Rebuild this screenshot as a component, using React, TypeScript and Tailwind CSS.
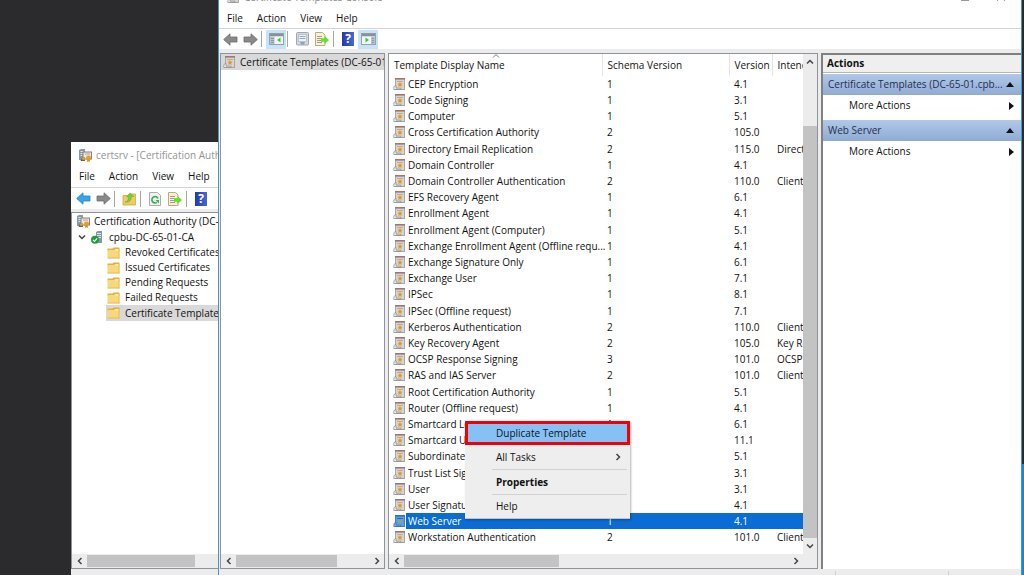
import React from "react";

interface Template {
  name: string;
  schema: string;
  version: string;
  purpose?: string;
}

const templates: Template[] = [
  { name: "CEP Encryption", schema: "1", version: "4.1" },
  { name: "Code Signing", schema: "1", version: "3.1" },
  { name: "Computer", schema: "1", version: "5.1" },
  { name: "Cross Certification Authority", schema: "2", version: "105.0" },
  { name: "Directory Email Replication", schema: "2", version: "115.0", purpose: "Directory" },
  { name: "Domain Controller", schema: "1", version: "4.1" },
  { name: "Domain Controller Authentication", schema: "2", version: "110.0", purpose: "Client" },
  { name: "EFS Recovery Agent", schema: "1", version: "6.1" },
  { name: "Enrollment Agent", schema: "1", version: "4.1" },
  { name: "Enrollment Agent (Computer)", schema: "1", version: "5.1" },
  { name: "Exchange Enrollment Agent (Offline requ...", schema: "1", version: "4.1" },
  { name: "Exchange Signature Only", schema: "1", version: "6.1" },
  { name: "Exchange User", schema: "1", version: "7.1" },
  { name: "IPSec", schema: "1", version: "8.1" },
  { name: "IPSec (Offline request)", schema: "1", version: "7.1" },
  { name: "Kerberos Authentication", schema: "2", version: "110.0", purpose: "Client" },
  { name: "Key Recovery Agent", schema: "2", version: "105.0", purpose: "Key Rec" },
  { name: "OCSP Response Signing", schema: "3", version: "101.0", purpose: "OCSP" },
  { name: "RAS and IAS Server", schema: "2", version: "101.0", purpose: "Client" },
  { name: "Root Certification Authority", schema: "1", version: "5.1" },
  { name: "Router (Offline request)", schema: "1", version: "4.1" },
  { name: "Smartcard Logon", schema: "1", version: "6.1" },
  { name: "Smartcard User", schema: "1", version: "11.1" },
  { name: "Subordinate Certification Authority", schema: "1", version: "5.1" },
  { name: "Trust List Signing", schema: "1", version: "3.1" },
  { name: "User", schema: "1", version: "3.1" },
  { name: "User Signature Only", schema: "1", version: "4.1" },
  { name: "Web Server", schema: "1", version: "4.1" },
  { name: "Workstation Authentication", schema: "2", version: "101.0", purpose: "Client" },
];

const folders = [
  "Revoked Certificates",
  "Issued Certificates",
  "Pending Requests",
  "Failed Requests",
  "Certificate Templates",
];

/* Icons */

const TemplateIcon: React.FC<{ selected?: boolean }> = ({ selected }) => (
  <svg className="w-3 h-3 shrink-0" viewBox="0 0 12 12">
    <path d="M2 0h10v12H2z" fill={selected ? "#3f83cc" : "#a9a6a6"} />
    <path d="M3 1.500h8v9.500H3z" fill={selected ? "#5b9fe0" : "#d8d4d0"} />
    <path d="M2 0h10v1.500H2z" fill={selected ? "#3d72b0" : "#a3786c"} />
    <path d="M4 3.500h6" stroke={selected ? "#2b67aa" : "#b3aeab"} />
    <path d="M7 4l.8 1.600 1.800.2-1.300 1.300.3 1.800L7 8.100l-1.600.8.3-1.800-1.300-1.300 1.800-.2z" fill={selected ? "#8fa48f" : "#de9a25"} />
    <path d="M.8 10.200C.8 8.500 1.500 7.500 3 7.500v2.700h5v1.300H.8z" fill={selected ? "#7db5ec" : "#f6f6f6"} stroke={selected ? "#2c6fb8" : "#858282"} strokeWidth=".7" />
  </svg>
);

const AuthorityIcon = () => (
  <svg className="w-[13px] h-[13px] shrink-0" viewBox="0 0 13 13">
    <path d="M0 1l2-1h4v11H0z" fill="#8799a6" />
    <path d="M1.500 2.500h3M1.500 4.500h3M1.500 6.500h2" stroke="#dfe7ec" />
    <rect x="4" y="3" width="8.500" height="7" fill="#efe5dc" stroke="#86807c" />
    <path d="M6 5h5" stroke="#b5a59a" />
    <path d="M3 8.500L1.500 12H6V8.500z" fill="#77603f" />
    <circle cx="4.500" cy="9.500" r="1.500" fill="#dba23b" />
    <circle cx="9.500" cy="9" r="2.500" fill="#e2a030" />
    <path d="M8.200 10.500V13l1.300-.8 1.300.8v-2.500z" fill="#d48c28" />
  </svg>
);

const ServerIcon = () => (
  <svg className="w-3 h-[13px] shrink-0" viewBox="0 0 12 13">
    <path d="M5 1l2-1h4v12H5z" fill="#8696a1" />
    <path d="M6 2.500h4M6 4.500h4M6 6.500h4" stroke="#dbe4ea" />
    <circle cx="4" cy="8.800" r="4" fill="#1f9d3e" />
    <path d="M2 8.800l1.500 1.600 2.600-3" fill="none" stroke="#fff" strokeWidth="1.100" />
  </svg>
);

const FolderIcon = () => (
  <svg className="w-[13px] h-3 shrink-0" viewBox="0 0 13 12">
    <path d="M.5 1.500h5l1-1h6V4h-12z" fill="#ddb048" />
    <path d="M.5 3H7l1-1h4.500v9.500H.5z" fill="#f9d87c" />
    <path d="M.5 11h12M12 2.500v9" stroke="#e0b955" strokeWidth=".8" />
    <path d="M8.500 3h2.500" stroke="#fff3c4" />
  </svg>
);

const ArrowIcon: React.FC<{ fill: string; stroke: string; right?: boolean }> = ({ fill, stroke, right }) => (
  <svg className={`w-[15px] h-[13px] ${right ? "-scale-x-100" : ""}`} viewBox="0 0 15 13">
    <path d="M.7 6.500L7 .8v3.200h7v5H7v3.200z" fill={fill} stroke={stroke} strokeWidth=".8" />
  </svg>
);

const UpFolderIcon = () => (
  <svg className="w-[14px] h-[14px]" viewBox="0 0 14 14">
    <path d="M1 3.500h5l1-1.500h6.500v11H1z" fill="#f0ca66" stroke="#d0a744" strokeWidth=".8" />
    <path d="M3 10c2.500-.5 3.500-2 3.500-5H4.500L8 1l4 3.500H9.500C9.500 8.500 7 11 3 10z" fill="#6fd02f" stroke="#56a82a" strokeWidth=".4" />
  </svg>
);

const RefreshIcon = () => (
  <svg className="w-3 h-[14px]" viewBox="0 0 12 14">
    <path d="M.5.5h8l3 3v10H.5z" fill="#f1f1f1" stroke="#adadad" />
    <path d="M9 6.500A3.200 3.200 0 1 0 8 10.300" fill="none" stroke="#31b450" strokeWidth="1.600" />
    <path d="M6.500 8H10v3.500z" fill="#31b450" />
  </svg>
);

const ExportIcon = () => (
  <svg className="w-[14px] h-[14px]" viewBox="0 0 14 14">
    <path d="M.5.5h7l2.500 2.500v10.500H.5z" fill="#faf2cf" stroke="#b3ab90" />
    <path d="M2 4.500h5M2 6.500h4M2 8.500h4M2 10.500h5" stroke="#a19d8c" />
    <path d="M6 6.200h3.500V4L14 8l-4.500 4V9.800H6z" fill="#62e02c" />
  </svg>
);

const PropertiesIcon = () => (
  <svg className="w-[13px] h-[14px]" viewBox="0 0 13 14">
    <rect x=".5" y=".5" width="12" height="12.500" rx="1" fill="#d5dade" stroke="#a0a6ab" />
    <rect x="2.500" y="2.500" width="8" height="7" fill="#eef3f7" stroke="#a9b6c1" strokeWidth=".7" />
    <path d="M3.500 4.500h6M3.500 6.500h6" stroke="#8fa8bd" />
    <path d="M4 10h5l-1 2.500H5z" fill="#7ea6c6" />
  </svg>
);

const HelpIcon = () => (
  <span className="flex items-center justify-center w-3 h-[14px] bg-gradient-to-r from-[#2438a5] to-[#4668d8] text-white text-[12px] font-bold leading-none">
    ?
  </span>
);

const PaneIcon: React.FC<{ side: "left" | "right" }> = ({ side }) => (
  <svg className="w-[15px] h-3" viewBox="0 0 15 12">
    <rect x=".5" y=".5" width="14" height="11" fill="#f2f5f7" stroke="#97a1a9" />
    <path d="M1 2h13" stroke="#879199" strokeWidth="2.500" />
    <path d={side === "left" ? "M1 3.500h4.500V11H1z" : "M10 3.500h4V11h-4z"} fill="#b9c3ca" />
    <path d={side === "left" ? "M2 5.500h3M2 7.500h3M2 9.500h3" : "M11 5.500h2M11 7.500h2M11 9.500h2"} stroke="#8898a4" />
    <path d={side === "left" ? "M11.500 4.500v5L8 7z" : "M4.500 4.500v5L8 7z"} fill="#3fc932" />
  </svg>
);

const Chevron: React.FC<{ className?: string }> = ({ className }) => (
  <svg className={`w-2 h-2 ${className ?? ""}`} viewBox="0 0 8 8">
    <path d="M5.500 1L2.500 4l3 3" fill="none" stroke="#444" strokeWidth="1.500" />
  </svg>
);

/* Shared parts */

const ToolButton: React.FC<{ label: string; active?: boolean; children: React.ReactNode }> = ({
  label,
  active,
  children,
}) => (
  <button
    aria-label={label}
    className={`flex items-center justify-center w-5 h-[19px] ${active ? "bg-[#c5e3fb]" : ""}`}
  >
    {children}
  </button>
);

const Divider = () => <div className="w-px h-4 ml-px mr-1 bg-[#a8a8a8]" />;

const MenuBar: React.FC = () => (
  <nav className="flex items-center h-[17px] shrink-0 pl-2 gap-[14px]">
    {["File", "Action", "View", "Help"].map((item) => (
      <button key={item}>{item}</button>
    ))}
  </nav>
);

const HScroll: React.FC<{ thumb: string }> = ({ thumb }) => (
  <div className="flex items-center h-[14px] shrink-0 bg-[#ececec]">
    <button aria-label="Scroll left" className="flex justify-center w-[15px]">
      <Chevron />
    </button>
    <div className="flex-1">
      <div className={`h-3 bg-[#c3c3c3] ${thumb}`} />
    </div>
    <button aria-label="Scroll right" className="flex justify-center w-[15px]">
      <Chevron className="rotate-180" />
    </button>
  </div>
);

/* Windows */

const CertsrvWindow = () => (
  <section className="absolute left-[71px] top-[142px] bottom-0 w-[320px] flex flex-col bg-white overflow-hidden">
    <header className="flex items-center h-[26px] shrink-0 pl-2 gap-1 text-[#959595]">
      <AuthorityIcon />
      <span className="whitespace-nowrap">certsrv - [Certification Authority]</span>
    </header>
    <MenuBar />
    <div className="flex items-center h-[22px] mt-[2px] shrink-0 pl-[2px] border-t border-[#d4d4dc]">
      <ToolButton label="Back"><ArrowIcon fill="#35a5ea" stroke="#2583c4" /></ToolButton>
      <ToolButton label="Forward"><ArrowIcon fill="#8a8a8a" stroke="#6c6c6c" right /></ToolButton>
      <Divider />
      <ToolButton label="Up one level"><UpFolderIcon /></ToolButton>
      <Divider />
      <ToolButton label="Refresh"><RefreshIcon /></ToolButton>
      <ToolButton label="Export list"><ExportIcon /></ToolButton>
      <Divider />
      <ToolButton label="Help"><HelpIcon /></ToolButton>
    </div>
    <div className="h-[3px] shrink-0 bg-[#ececec]" />
    <div className="flex flex-col flex-1 border border-[#8f939c] overflow-hidden">
      <ul className="flex-1 whitespace-nowrap">
        <li className="flex items-center h-4 pl-[5px] gap-1">
          <AuthorityIcon />
          Certification Authority (DC-65-01)
        </li>
        <li className="flex items-center h-4 pl-[6px]">
          <Chevron className="-rotate-90" />
          <span className="flex items-center pl-[5px] gap-[6px]">
            <ServerIcon />
            cpbu-DC-65-01-CA
          </span>
        </li>
        {folders.map((folder) => (
          <li
            key={folder}
            className={`flex items-center h-[15px] ml-[34px] pl-px gap-[5px] last:h-4 ${
              folder === "Certificate Templates" ? "bg-[#d9d9d9]" : ""
            }`}
          >
            <FolderIcon />
            {folder}
          </li>
        ))}
      </ul>
      <HScroll thumb="w-[108px]" />
    </div>
    <div className="h-[6px] shrink-0 bg-[#ececec]" />
  </section>
);

const TemplateTable = () => (
  <div className="flex-1 min-h-0 overflow-hidden">
    <table className="w-full table-fixed border-collapse text-left whitespace-nowrap">
      <thead>
        <tr className="h-[22px]">
          <th className="relative w-[213px] p-0 pl-[5px] font-normal border-r border-[#e5e5e5]">
            <svg className="absolute left-[103px] top-0 w-2 h-1" viewBox="0 0 8 4">
              <path d="M1 3.500l3-3 3 3" fill="none" stroke="#777" />
            </svg>
            Template Display Name
          </th>
          <th className="w-[127px] p-0 pl-[5px] font-normal border-r border-[#e5e5e5]">Schema Version</th>
          <th className="w-[43px] p-0 pl-[5px] font-normal border-r border-[#e5e5e5]">Version</th>
          <th className="p-0 pl-[5px] font-normal overflow-hidden">Intended</th>
        </tr>
      </thead>
      <tbody>
        {templates.map((t) => {
          const selected = t.name === "Web Server";
          const cell = selected ? "bg-[#0a6cd4] text-white" : "";
          return (
            <tr key={t.name} className="h-4 leading-4 [&:nth-child(5n)]:h-[17px]">
              <td className="p-0">
                <div className="flex items-center h-full">
                  <span className="w-[17px] pl-1 shrink-0">
                    <TemplateIcon selected={selected} />
                  </span>
                  <span className={`flex-1 pl-[2px] ${cell}`}>{t.name}</span>
                </div>
              </td>
              <td className={`p-0 pl-[5px] ${cell}`}>{t.schema}</td>
              <td className={`p-0 pl-[5px] ${cell}`}>{t.version}</td>
              <td className={`p-0 pl-[5px] overflow-hidden ${cell}`}>{t.purpose}</td>
            </tr>
          );
        })}
      </tbody>
    </table>
  </div>
);

const ActionGroup: React.FC<{ title: string }> = ({ title }) => (
  <div className="pb-1">
    <button className="flex items-center justify-between w-full h-[21px] pl-[5px] pr-[7px] bg-gradient-to-b from-[#b1c8e7] to-[#8fabd5] text-[#1f2f4d]">
      <span>{title}</span>
      <svg className="w-2 h-[5px]" viewBox="0 0 8 5"><path d="M0 5l4-5 4 5z" fill="#111" /></svg>
    </button>
    <button className="flex items-center justify-between w-full h-[21px] pl-[26px] pr-[7px]">
      <span>More Actions</span>
      <svg className="w-[5px] h-2" viewBox="0 0 5 8"><path d="M0 0l5 4-5 4z" fill="#111" /></svg>
    </button>
  </div>
);

const TemplatesWindow = () => (
  <section className="absolute left-[218px] right-[2px] -top-4 bottom-0 flex flex-col bg-white border-x border-[#4a93c9]">
    <header className="flex items-center h-[26px] shrink-0 pl-2 gap-[5px] text-[#8a8a8a]">
      <TemplateIcon />
      <span className="flex-1">Certificate Templates Console</span>
      <div className="flex items-center gap-7 pr-4">
        <button aria-label="Minimize"><svg className="w-2 h-2" viewBox="0 0 8 8"><path d="M0 7.500h8" stroke="#999" /></svg></button>
        <button aria-label="Close"><svg className="w-2 h-2" viewBox="0 0 8 8"><path d="M0 0l8 8M8 0L0 8" stroke="#999" /></svg></button>
      </div>
    </header>
    <MenuBar />
    <div className="flex items-center h-[21px] mt-px shrink-0 pl-px border-t border-[#d4d4dc]">
      <ToolButton label="Back"><ArrowIcon fill="#8a8a8a" stroke="#6c6c6c" /></ToolButton>
      <ToolButton label="Forward"><ArrowIcon fill="#8a8a8a" stroke="#6c6c6c" right /></ToolButton>
      <Divider />
      <ToolButton label="Show tree" active><PaneIcon side="left" /></ToolButton>
      <Divider />
      <ToolButton label="Properties"><PropertiesIcon /></ToolButton>
      <ToolButton label="Export list"><ExportIcon /></ToolButton>
      <Divider />
      <ToolButton label="Help"><HelpIcon /></ToolButton>
      <ToolButton label="Show actions" active><PaneIcon side="right" /></ToolButton>
    </div>
    <main className="flex flex-1 min-h-0 gap-[3px] pt-1 pl-px bg-[#ececec]">
      {/* Console tree */}
      <div className="flex flex-col w-[165px] shrink-0 bg-white border border-[#8f939c] overflow-hidden">
        <div className="flex-1 whitespace-nowrap">
          <div className="flex items-center h-4 pl-[2px] gap-[5px] bg-[#d9d9d9]">
            <TemplateIcon />
            Certificate Templates (DC-65-01)
          </div>
        </div>
        <HScroll thumb="w-[101px]" />
      </div>

      {/* Template list */}
      <div className="flex flex-col flex-1 min-w-0 bg-white border border-[#8f939c]">
        <div className="flex flex-1 min-h-0">
          <TemplateTable />
          <div className="flex flex-col items-center w-[14px] bg-[#ececec]">
            <button aria-label="Scroll up" className="h-4"><Chevron className="rotate-90" /></button>
            <div className="flex flex-col justify-end flex-1 w-full">
              <div className="h-[88%] bg-[#c3c3c3]" />
            </div>
            <button aria-label="Scroll down" className="h-4"><Chevron className="-rotate-90" /></button>
          </div>
        </div>
        <div className="pr-[14px] bg-[#ececec]">
          <HScroll thumb="w-[155px]" />
        </div>
      </div>

      {/* Actions */}
      <aside className="w-[200px] shrink-0 bg-white border-t-2 border-l-2 border-[#808080]">
        <h2 className="flex items-center h-[18px] mb-px pl-1 font-bold bg-[#efefef] border-b border-[#b5b5b5]">Actions</h2>
        <ActionGroup title="Certificate Templates (DC-65-01.cpb..." />
        <ActionGroup title="Web Server" />
      </aside>
    </main>
    <footer className="flex justify-end h-[6px] shrink-0 bg-[#ececec] pt-[2px]">
      <div className="w-[113px] border-l border-[#cfcfcf]" />
      <div className="w-[73px] border-l border-[#cfcfcf]" />
    </footer>
  </section>
);

const ContextMenu = () => (
  <div className="absolute left-[465px] top-[421px] w-[165px] bg-[#eeeeee] border-b border-[#c4c4c4] shadow-[1px_1px_2px_rgba(0,0,0,0.3)]">
    <button className="block w-full h-6 pl-7 text-left bg-[#86c1f6] border-[3px] border-[#f00008]">Duplicate Template</button>
    <button className="flex items-center justify-between w-full h-6 pl-[31px] pr-2">
      All Tasks
      <Chevron className="rotate-180" />
    </button>
    <hr className="ml-[27px] mr-[3px] border-[#d2d2d2]" />
    <button className="block w-full h-6 pl-[31px] text-left font-bold">Properties</button>
    <hr className="ml-[27px] mr-[3px] border-[#d2d2d2]" />
    <button className="block w-full h-[23px] pl-[31px] text-left">Help</button>
  </div>
);

export default function App() {
  return (
    <div className="relative h-screen overflow-hidden bg-[#2b2b2e] font-['Open_Sans','Noto_Sans',sans-serif] text-[10px] leading-[15px] text-[#111111]">
      <div className="absolute right-0 bottom-0 w-[3px] h-[111px] bg-[#1288d8]" />
      <CertsrvWindow />
      <TemplatesWindow />
      <ContextMenu />
    </div>
  );
}
